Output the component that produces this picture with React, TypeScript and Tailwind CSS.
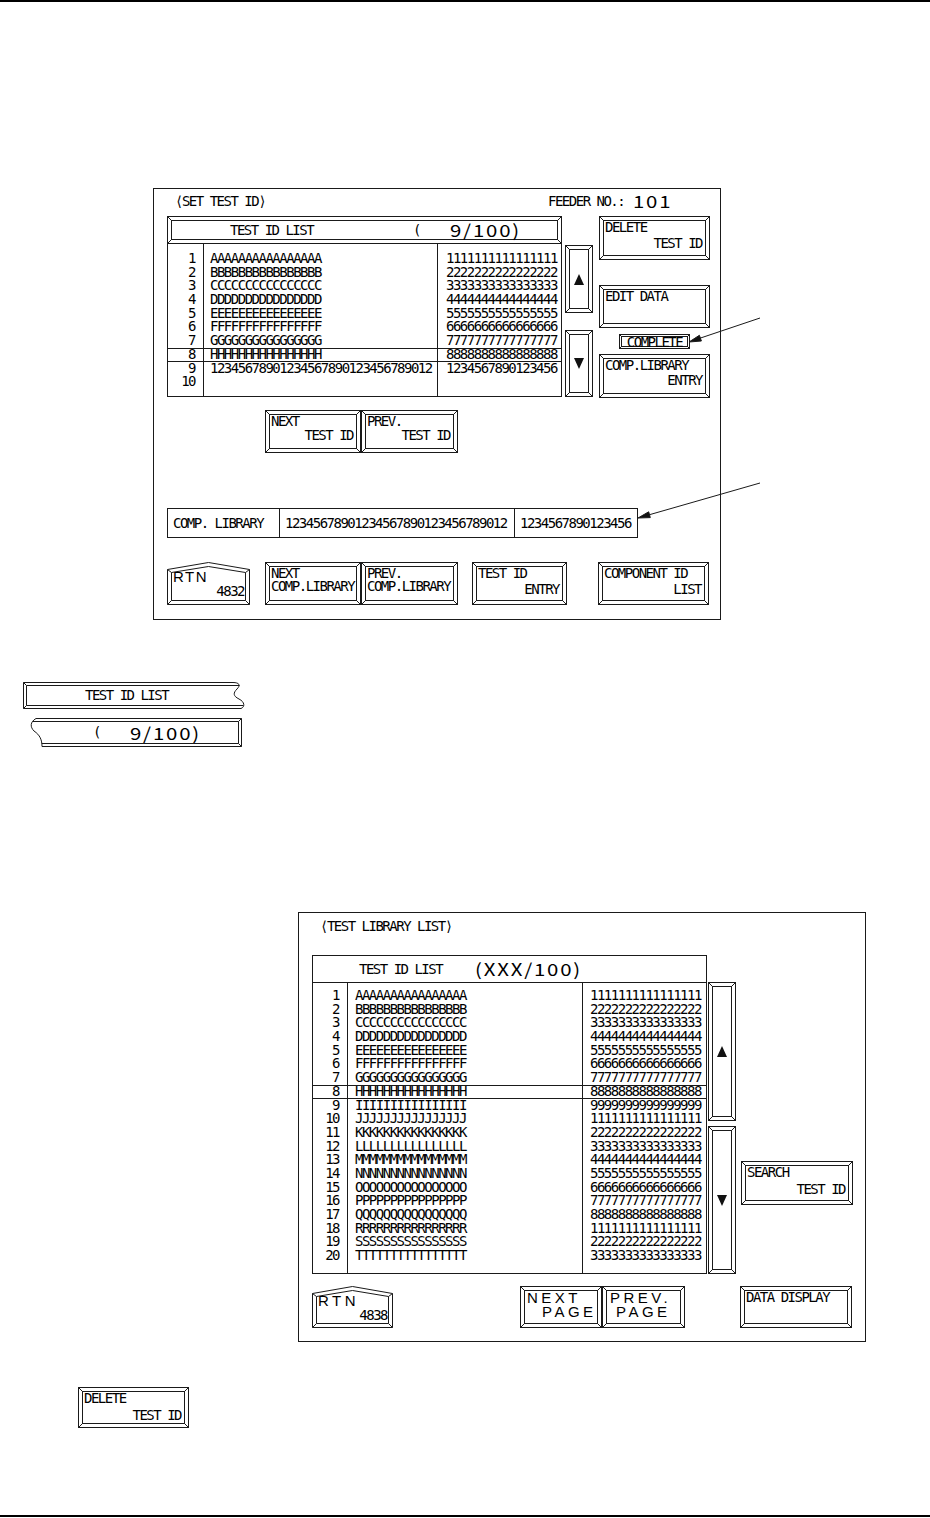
import React from "react";

const INK = "border-[#1a1a1a]";
const MONO = "font-['DejaVu_Sans_Mono','DejaVu_Sans',monospace] text-[14px] tracking-[-1.5px]";
const WIDE = "font-['Noto_Sans_CJK_JP','Noto_Sans',sans-serif]";
const LAT = "font-['Liberation_Sans',Arial,sans-serif]";

function M({ children, className = "" }: { children: React.ReactNode; className?: string }) {
  return <span className={`whitespace-nowrap ${className}`}>{children}</span>;
}

function W({ children, className = "" }: { children: React.ReactNode; className?: string }) {
  return (
    <span
      className={`inline-block origin-left scale-x-[1.2] whitespace-nowrap ${WIDE} text-[17px] leading-[14px] tracking-[1.5px] ${className}`}
    >
      {children}
    </span>
  );
}

function Corners({ d }: { d: number }) {
  return (
    <svg className="pointer-events-none absolute inset-0 h-full w-full overflow-visible" aria-hidden="true">
      <g stroke="#1a1a1a" strokeWidth={1} fill="none">
        <line x1={-0.5} y1={-0.5} x2={d} y2={d} />
        <svg x="100%" y="0" overflow="visible">
          <line x1={0.5} y1={-0.5} x2={-d} y2={d} />
        </svg>
        <svg x="0" y="100%" overflow="visible">
          <line x1={-0.5} y1={0.5} x2={d} y2={-d} />
        </svg>
        <svg x="100%" y="100%" overflow="visible">
          <line x1={0.5} y1={0.5} x2={-d} y2={-d} />
        </svg>
      </g>
    </svg>
  );
}

function Bevel({
  className = "",
  inner = "",
  m = 3,
  children,
}: {
  className?: string;
  inner?: string;
  m?: number;
  children?: React.ReactNode;
}) {
  const pad = m === 1 ? "p-[1px]" : m === 2 ? "p-[2px]" : m === 4 ? "p-[4px]" : "p-[3px]";
  return (
    <div className={`relative flex shrink-0 border ${INK} bg-white ${pad} ${className}`}>
      <Corners d={m + 0.5} />
      <div className={`relative flex min-w-0 flex-1 border ${INK} ${inner}`}>{children}</div>
    </div>
  );
}

function Btn({
  className,
  a,
  b,
  gap = "mt-[3px]",
  bLeft = false,
}: {
  className: string;
  a: string;
  b?: string;
  gap?: string;
  bLeft?: boolean;
}) {
  return (
    <Bevel className={className}>
      <div className={`flex min-w-0 flex-1 flex-col pl-[1px] pr-[3px] ${MONO} leading-[13px]`}>
        <M className="self-start">{a}</M>
        {b ? <M className={`${bLeft ? "self-start" : "self-end"} ${gap}`}>{b}</M> : null}
      </div>
    </Bevel>
  );
}

function WideBtn({
  className,
  a,
  b,
  aCls,
  bCls,
}: {
  className: string;
  a: string;
  b: string;
  aCls: string;
  bCls: string;
}) {
  return (
    <Bevel className={className}>
      <div className={`flex flex-1 flex-col ${LAT} text-[15px] leading-[14px] tracking-[3.5px]`}>
        <span className={`whitespace-nowrap ${aCls}`}>{a}</span>
        <span className={`whitespace-nowrap ${bCls}`}>{b}</span>
      </div>
    </Bevel>
  );
}

function Scroll({ className, up }: { className: string; up?: boolean }) {
  return (
    <Bevel className={className} inner="items-center justify-center">
      <svg width="10" height="11" viewBox="0 0 10 11" aria-hidden="true">
        <polygon points={up ? "5,0 10,11 0,11" : "0,0 10,0 5,11"} fill="#111" />
      </svg>
    </Bevel>
  );
}

function Rtn({
  w,
  h,
  num,
  cls,
  rtnCls,
}: {
  w: number;
  h: number;
  num: string;
  cls: string;
  rtnCls: string;
}) {
  const r = w - 0.5;
  const c = w / 2;
  const ir = w - 4.5;
  const b = h - 0.5;
  const ib = h - 4.5;
  return (
    <div className={`relative flex shrink-0 flex-col ${cls}`}>
      <svg className="absolute inset-0" width={w} height={h} fill="none" stroke="#1a1a1a" aria-hidden="true">
        <polygon points={`0.5,7.5 ${c},0.5 ${r},7.5 ${r},${b} 0.5,${b}`} fill="white" />
        <polygon points={`4.5,10.5 ${c},4.5 ${ir},10.5 ${ir},${ib} 4.5,${ib}`} />
        <path d={`M0.5 7.5 L4.5 10.5 M${r} 7.5 L${ir} 10.5 M${r} ${b} L${ir} ${ib} M0.5 ${b} L4.5 ${ib}`} />
      </svg>
      <span className={`relative ml-[6px] mt-[8px] self-start whitespace-nowrap ${LAT} text-[15px] leading-[14px] ${rtnCls}`}>
        RTN
      </span>
      <span className={`relative mr-[6px] mt-[1px] self-end ${MONO} leading-[13px]`}>
        <M>{num}</M>
      </span>
    </div>
  );
}

function Row({ children, hl, pad }: { children: React.ReactNode; hl: boolean; pad: string }) {
  return (
    <div
      className={`h-[13.7px] whitespace-nowrap ${pad} ${
        hl ? `border-y ${INK} leading-[11.7px]` : "leading-[13.7px]"
      }`}
    >
      <M>{children}</M>
    </div>
  );
}

const rep = (s: string) => s.repeat(16);

const s1Names = [
  ...["A", "B", "C", "D", "E", "F", "G", "H"].map(rep),
  "12345678901234567890123456789012",
  "",
];
const s1Vals = [
  ...["1", "2", "3", "4", "5", "6", "7", "8"].map(rep),
  "1234567890123456",
  "",
];

const s2Names = "ABCDEFGHIJKLMNOPQRST".split("").map(rep);
const s2Vals = ["1", "2", "3", "4", "5", "6", "7", "8", "9", "1", "2", "3", "4", "5", "6", "7", "8", "1", "2", "3"].map(rep);

function Screen1() {
  return (
    <div className={`ml-[153px] mt-[186px] flex h-[432px] w-[568px] shrink-0 flex-col border ${INK} pl-[13px] pt-[5px]`}>
      <div className={`flex h-[14px] items-center ${MONO} leading-[14px]`}>
        <span className="ml-[8px] w-[373px] shrink-0">
          <M>⟨SET TEST ID⟩</M>
        </span>
        <M>FEEDER NO.:</M>
        <W className="ml-[9px]">101</W>
      </div>

      <div className="mt-[8px] flex items-start">
        <div className="flex w-[395px] shrink-0 flex-col">
          <Bevel className="h-[28px]" inner="items-center">
            <span className={`w-[241px] shrink-0 pl-[58px] ${MONO} leading-[13px]`}>
              <M>TEST ID LIST</M>
            </span>
            <span className={`w-[37px] shrink-0 ${MONO} leading-[13px]`}>
              <M>(</M>
            </span>
            <W>9/100)</W>
          </Bevel>
          <div className={`flex h-[153px] border-x border-b ${INK} ${MONO}`}>
            <div className={`w-[36px] shrink-0 border-r ${INK} pt-[8px] text-right`}>
              {s1Names.map((_, i) => (
                <Row key={i} hl={i === 7} pad="pr-[8px]">
                  {i + 1}
                </Row>
              ))}
            </div>
            <div className={`w-[234px] shrink-0 border-r ${INK} pt-[8px]`}>
              {s1Names.map((n, i) => (
                <Row key={i} hl={i === 7} pad="pl-[6px]">
                  {n}
                </Row>
              ))}
            </div>
            <div className="min-w-0 flex-1 pt-[8px]">
              {s1Vals.map((n, i) => (
                <Row key={i} hl={i === 7} pad="pl-[8px]">
                  {n}
                </Row>
              ))}
            </div>
          </div>
        </div>

        <div className="ml-[3px] flex w-[28px] shrink-0 flex-col">
          <Scroll className="mt-[29px] h-[68px]" up />
          <Scroll className="mt-[17px] h-[67px]" />
        </div>

        <div className="ml-[6px] flex w-[111px] shrink-0 flex-col">
          <Btn className="h-[44px]" a="DELETE" b="TEST ID" />
          <Btn className="mt-[25px] h-[43px]" a="EDIT DATA" />
          <Bevel className="ml-[20px] mt-[6px] h-[15px] w-[71px]" m={1} inner="items-center justify-center">
            <span className={`${MONO} leading-[10px]`}>
              <M>COMPLETE</M>
            </span>
          </Bevel>
          <Btn className="mt-[5px] h-[44px]" a="COMP.LIBRARY" b="ENTRY" gap="mt-[2px]" />
        </div>
      </div>

      <div className="ml-[98px] mt-[12px] flex">
        <Btn className="h-[43px] w-[96px]" a="NEXT" b="TEST ID" gap="mt-[1px]" />
        <Btn className="h-[43px] w-[97px]" a="PREV." b="TEST ID" gap="mt-[1px]" />
      </div>

      <div className={`mt-[55px] flex h-[30px] w-[471px] border ${INK} ${MONO} leading-[13px]`}>
        <div className={`flex w-[112px] shrink-0 items-center border-r ${INK} pl-[5px]`}>
          <M>COMP. LIBRARY</M>
        </div>
        <div className={`flex w-[235px] shrink-0 items-center border-r ${INK} pl-[5px]`}>
          <M>12345678901234567890123456789012</M>
        </div>
        <div className="flex min-w-0 flex-1 items-center pl-[5px]">
          <M>1234567890123456</M>
        </div>
      </div>

      <div className="mt-[24px] flex">
        <Rtn w={83} h={43} num="4832" cls="h-[43px] w-[83px]" rtnCls="tracking-[1.5px]" />
        <Btn className="ml-[15px] h-[43px] w-[96px]" a="NEXT" b="COMP.LIBRARY" gap="mt-0" bLeft />
        <Btn className="h-[43px] w-[97px]" a="PREV." b="COMP.LIBRARY" gap="mt-0" bLeft />
        <Btn className="ml-[14px] h-[43px] w-[95px]" a="TEST ID" b="ENTRY" />
        <Btn className="ml-[31px] h-[43px] w-[111px]" a="COMPONENT ID" b="LIST" />
      </div>
    </div>
  );
}

function Legend() {
  return (
    <>
      <div className="relative ml-[23px] mt-[62px] flex h-[27px] w-[223px] shrink-0 items-center">
        <svg className="absolute inset-0" width="223" height="27" viewBox="0 0 223 27" fill="none" stroke="#1a1a1a" aria-hidden="true">
          <path d="M210 0.5 H0.5 V26.5 H218" />
          <path d="M210 0.5 C216 0.5 218 3 214 7 C210 11 210 14 216 17 C222 20 222 25 218 26.5" />
          <path d="M216.5 3.5 H3.5 V23.5 H220.5" />
          <path d="M0.5 0.5 L3.5 3.5 M0.5 26.5 L3.5 23.5" />
        </svg>
        <span className={`relative ml-[62px] ${MONO} leading-[13px]`}>
          <M>TEST ID LIST</M>
        </span>
      </div>
      <div className="relative ml-[30px] mt-[9px] flex h-[29px] w-[212px] shrink-0 items-center">
        <svg className="absolute inset-0" width="212" height="29" viewBox="0 0 212 29" fill="none" stroke="#1a1a1a" aria-hidden="true">
          <path d="M6 0.5 H211.5 V28.5 H12" />
          <path d="M6 0.5 C0 4 0 9 4 13 C10 17 12 22 12 28.5" />
          <path d="M2.5 3.5 H208.5 V25.5 H11.8" />
          <path d="M211.5 0.5 L208.5 3.5 M211.5 28.5 L208.5 25.5" />
        </svg>
        <span className={`relative ml-[63px] w-[37px] shrink-0 ${MONO} leading-[13px]`}>
          <M>(</M>
        </span>
        <W className="relative">9/100)</W>
      </div>
    </>
  );
}

function Screen2() {
  return (
    <div className={`ml-[298px] mt-[165px] flex h-[430px] w-[568px] shrink-0 flex-col border ${INK} pl-[13px] pt-[6px]`}>
      <div className={`flex h-[14px] items-center ${MONO} leading-[14px]`}>
        <span className="ml-[8px]">
          <M>⟨TEST LIBRARY LIST⟩</M>
        </span>
      </div>

      <div className="mt-[22px] flex items-start">
        <div className="flex w-[395px] shrink-0 flex-col">
          <div className={`flex h-[28px] items-center border ${INK}`}>
            <span className={`w-[162px] shrink-0 pl-[46px] ${MONO} leading-[13px]`}>
              <M>TEST ID LIST</M>
            </span>
            <W>(XXX/100)</W>
          </div>
          <div className={`flex h-[291px] border-x border-b ${INK} ${MONO}`}>
            <div className={`w-[35px] shrink-0 border-r ${INK} pt-[6px] text-right`}>
              {s2Names.map((_, i) => (
                <Row key={i} hl={i === 7} pad="pr-[8px]">
                  {i + 1}
                </Row>
              ))}
            </div>
            <div className={`w-[235px] shrink-0 border-r ${INK} pt-[6px]`}>
              {s2Names.map((n, i) => (
                <Row key={i} hl={i === 7} pad="pl-[7px]">
                  {n}
                </Row>
              ))}
            </div>
            <div className="min-w-0 flex-1 pt-[6px]">
              {s2Vals.map((n, i) => (
                <Row key={i} hl={i === 7} pad="pl-[7px]">
                  {n}
                </Row>
              ))}
            </div>
          </div>
        </div>

        <div className="ml-[1px] flex w-[28px] shrink-0 flex-col">
          <Scroll className="mt-[27px] h-[139px]" up />
          <Scroll className="mt-[5px] h-[148px]" />
        </div>

        <div className="ml-[5px] flex w-[112px] shrink-0 flex-col">
          <Btn className="mt-[206px] h-[44px]" a="SEARCH" b="TEST ID" gap="mt-[4px]" />
        </div>
      </div>

      <div className="mt-[12px] flex">
        <Rtn w={81} h={42} num="4838" cls="h-[42px] w-[81px]" rtnCls="tracking-[3.5px]" />
        <WideBtn className="ml-[127px] h-[42px] w-[82px]" a="NEXT" b="PAGE" aCls="ml-[2px]" bCls="ml-[17px]" />
        <WideBtn className="h-[42px] w-[83px]" a="PREV." b="PAGE" aCls="ml-[3px]" bCls="ml-[9px]" />
        <Btn className="ml-[55px] h-[42px] w-[112px]" a="DATA DISPLAY" />
      </div>
    </div>
  );
}

function Arrows() {
  return (
    <svg
      className="pointer-events-none absolute left-0 top-0"
      width="930"
      height="1518"
      viewBox="0 0 930 1518"
      aria-hidden="true"
    >
      <g stroke="#1a1a1a" strokeWidth="1" fill="#111">
        <line x1="760" y1="318" x2="700" y2="338.2" />
        <polygon points="689,342 701.4,341 699.4,335.3" />
        <line x1="760" y1="483" x2="649.5" y2="514.7" />
        <polygon points="638,518 650.3,517.6 648.7,511.8" />
      </g>
    </svg>
  );
}

export default function App() {
  return (
    <div className="relative flex h-[1518px] w-[930px] flex-col overflow-hidden bg-white text-black">
      <div className="h-[2px] w-full shrink-0 bg-black" />
      <Screen1 />
      <Legend />
      <Screen2 />
      <Btn className="ml-[78px] mt-[45px] h-[41px] w-[111px]" a="DELETE" b="TEST ID" gap="mt-[4px]" />
      <div className="mb-[1px] mt-auto h-[2px] w-full shrink-0 bg-black" />
      <Arrows />
    </div>
  );
}
